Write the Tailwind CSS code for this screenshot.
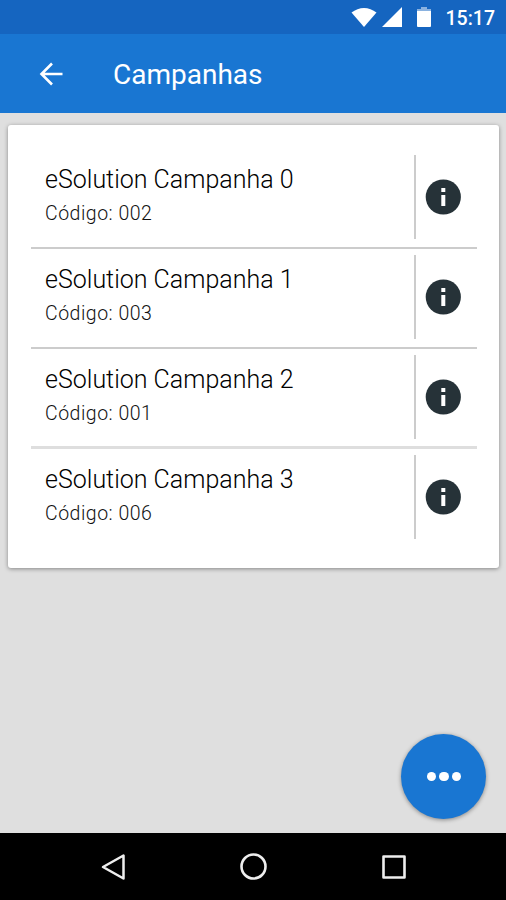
<!DOCTYPE html>
<html lang="pt-BR">
<head>
    <meta charset="UTF-8">
    <meta name="viewport" content="width=device-width, initial-scale=1.0">
    <title>Campanhas</title>
    <script src="https://cdn.jsdelivr.net/npm/@tailwindcss/browser@4"></script>
</head>
<body class="bg-[#dfdfdf] h-screen overflow-hidden flex flex-col font-['Roboto',sans-serif]">
<!-- Status bar -->
<div class="h-[34px] shrink-0 bg-[#1565c0] flex items-center justify-end pr-[11px] text-white">
    <svg class="w-[26px] h-5" viewBox="0 0 26 20" fill="currentColor"><path d="M.5 5.600C8 -.7 18 -.7 25.500 5.600L13 20z"/></svg>
    <svg class="w-5 h-5 ml-[5px]" viewBox="0 0 20 20" fill="currentColor"><path d="M20 0v20H0z"/></svg>
    <svg class="w-[14px] h-5 ml-[15px]" viewBox="0 0 14 20" fill="currentColor"><path d="M4 0h6v2h4v3H0V2h4z" opacity=".5"/><path d="M0 4h14v15a1 1 0 0 1-1 1H1a1 1 0 0 1-1-1z"/></svg>
    <span class="ml-[15px] text-[19.5px] leading-none font-medium mt-[3px]">15:17</span>
</div>
<!-- Toolbar -->
<header class="h-[79px] shrink-0 bg-[#1976d2] flex items-center pl-[39px] text-white">
    <button><svg class="w-6 h-6" viewBox="0 0 24 24" fill="none" stroke="currentColor" stroke-width="2.600"><path d="M23.500 12H2.500M13 1.500L2.500 12L13 22.500"/></svg></button>
    <h1 class="ml-[50px] mt-0.5 text-[28px] leading-8">Campanhas</h1>
</header>
<!-- Campaign list -->
<main class="flex-1 relative pt-3 pl-2 pr-[7px]">
    <ul class="h-[443px] bg-white rounded-[3px] shadow-[0_1px_4px_rgba(0,0,0,0.4)] pt-[24px] pl-[23px] pr-[22px]">
        <li class="h-[100px] flex border-b-2 border-[#cccccc]">
            <div class="flex-1 pl-[14px] pt-[15px]">
                <h2 class="text-[25px] leading-8 font-light text-black">eSolution Campanha 0</h2>
                <p class="mt-[4px] text-[19.5px] leading-7 font-light tracking-[0.5px] text-[#111111]">Código: 002</p>
            </div>
            <button class="w-[63px] mt-[6px] mb-[8px] pl-[9px] border-l-2 border-[#cccccc]">
                <svg class="w-9 h-9" viewBox="0 0 36 36"><circle cx="18.300" cy="18" r="17.600" fill="#263238"/><path d="M16.300 9h4v4h-4zM16.300 16h4v11h-4z" fill="#fff"/></svg>
            </button>
        </li>
        <li class="h-[100px] flex border-b-2 border-[#cccccc]">
            <div class="flex-1 pl-[14px] pt-[15px]">
                <h2 class="text-[25px] leading-8 font-light text-black">eSolution Campanha 1</h2>
                <p class="mt-[4px] text-[19.5px] leading-7 font-light tracking-[0.5px] text-[#111111]">Código: 003</p>
            </div>
            <button class="w-[63px] mt-[6px] mb-[8px] pl-[9px] border-l-2 border-[#cccccc]">
                <svg class="w-9 h-9" viewBox="0 0 36 36"><circle cx="18.300" cy="18" r="17.600" fill="#263238"/><path d="M16.300 9h4v4h-4zM16.300 16h4v11h-4z" fill="#fff"/></svg>
            </button>
        </li>
        <li class="h-[100px] flex border-b-3 border-[#dedede]">
            <div class="flex-1 pl-[14px] pt-[15px]">
                <h2 class="text-[25px] leading-8 font-light text-black">eSolution Campanha 2</h2>
                <p class="mt-[4px] text-[19.5px] leading-7 font-light tracking-[0.5px] text-[#111111]">Código: 001</p>
            </div>
            <button class="w-[63px] mt-[6px] mb-[7px] pl-[9px] border-l-2 border-[#cccccc]">
                <svg class="w-9 h-9" viewBox="0 0 36 36"><circle cx="18.300" cy="18" r="17.600" fill="#263238"/><path d="M16.300 9h4v4h-4zM16.300 16h4v11h-4z" fill="#fff"/></svg>
            </button>
        </li>
        <li class="h-[98px] flex">
            <div class="flex-1 pl-[14px] pt-[15px]">
                <h2 class="text-[25px] leading-8 font-light text-black">eSolution Campanha 3</h2>
                <p class="mt-[4px] text-[19.5px] leading-7 font-light tracking-[0.5px] text-[#111111]">Código: 006</p>
            </div>
            <button class="w-[63px] mt-[6px] mb-[8px] pl-[9px] border-l-2 border-[#cccccc]">
                <svg class="w-9 h-9" viewBox="0 0 36 36"><circle cx="18.300" cy="18" r="17.600" fill="#263238"/><path d="M16.300 9h4v4h-4zM16.300 16h4v11h-4z" fill="#fff"/></svg>
            </button>
        </li>
    </ul>
    <!-- Floating action button -->
    <button class="absolute right-5 bottom-[14px] w-[85px] h-[85px] rounded-full bg-[#1976d2] shadow-[0_1px_4px_rgba(0,0,0,0.4)] flex items-center justify-center gap-[3px] pl-px">
        <span class="w-[9.500px] h-[9.500px] rounded-full bg-white"></span>
        <span class="w-[9.500px] h-[9.500px] rounded-full bg-white"></span>
        <span class="w-[9.500px] h-[9.500px] rounded-full bg-white"></span>
    </button>
</main>
<!-- Navigation bar -->
<nav class="h-[67px] shrink-0 bg-black flex items-center pl-[100px] text-[#eeeeee]">
    <svg class="w-7 h-7" viewBox="0 0 28 28" fill="none" stroke="currentColor" stroke-width="2.500" stroke-linejoin="round"><path d="M23.500 2.500v23L3 14z"/></svg>
    <svg class="w-7 h-7 ml-[111px]" viewBox="0 0 28 28" fill="none" stroke="currentColor" stroke-width="2.600"><circle cx="14.500" cy="13.500" r="12"/></svg>
    <svg class="w-7 h-7 ml-[113px]" viewBox="0 0 28 28" fill="none" stroke="currentColor" stroke-width="2.600" stroke-linejoin="round"><path d="M3.500 3.500h21v21h-21z"/></svg>
</nav>
</body>
</html>
